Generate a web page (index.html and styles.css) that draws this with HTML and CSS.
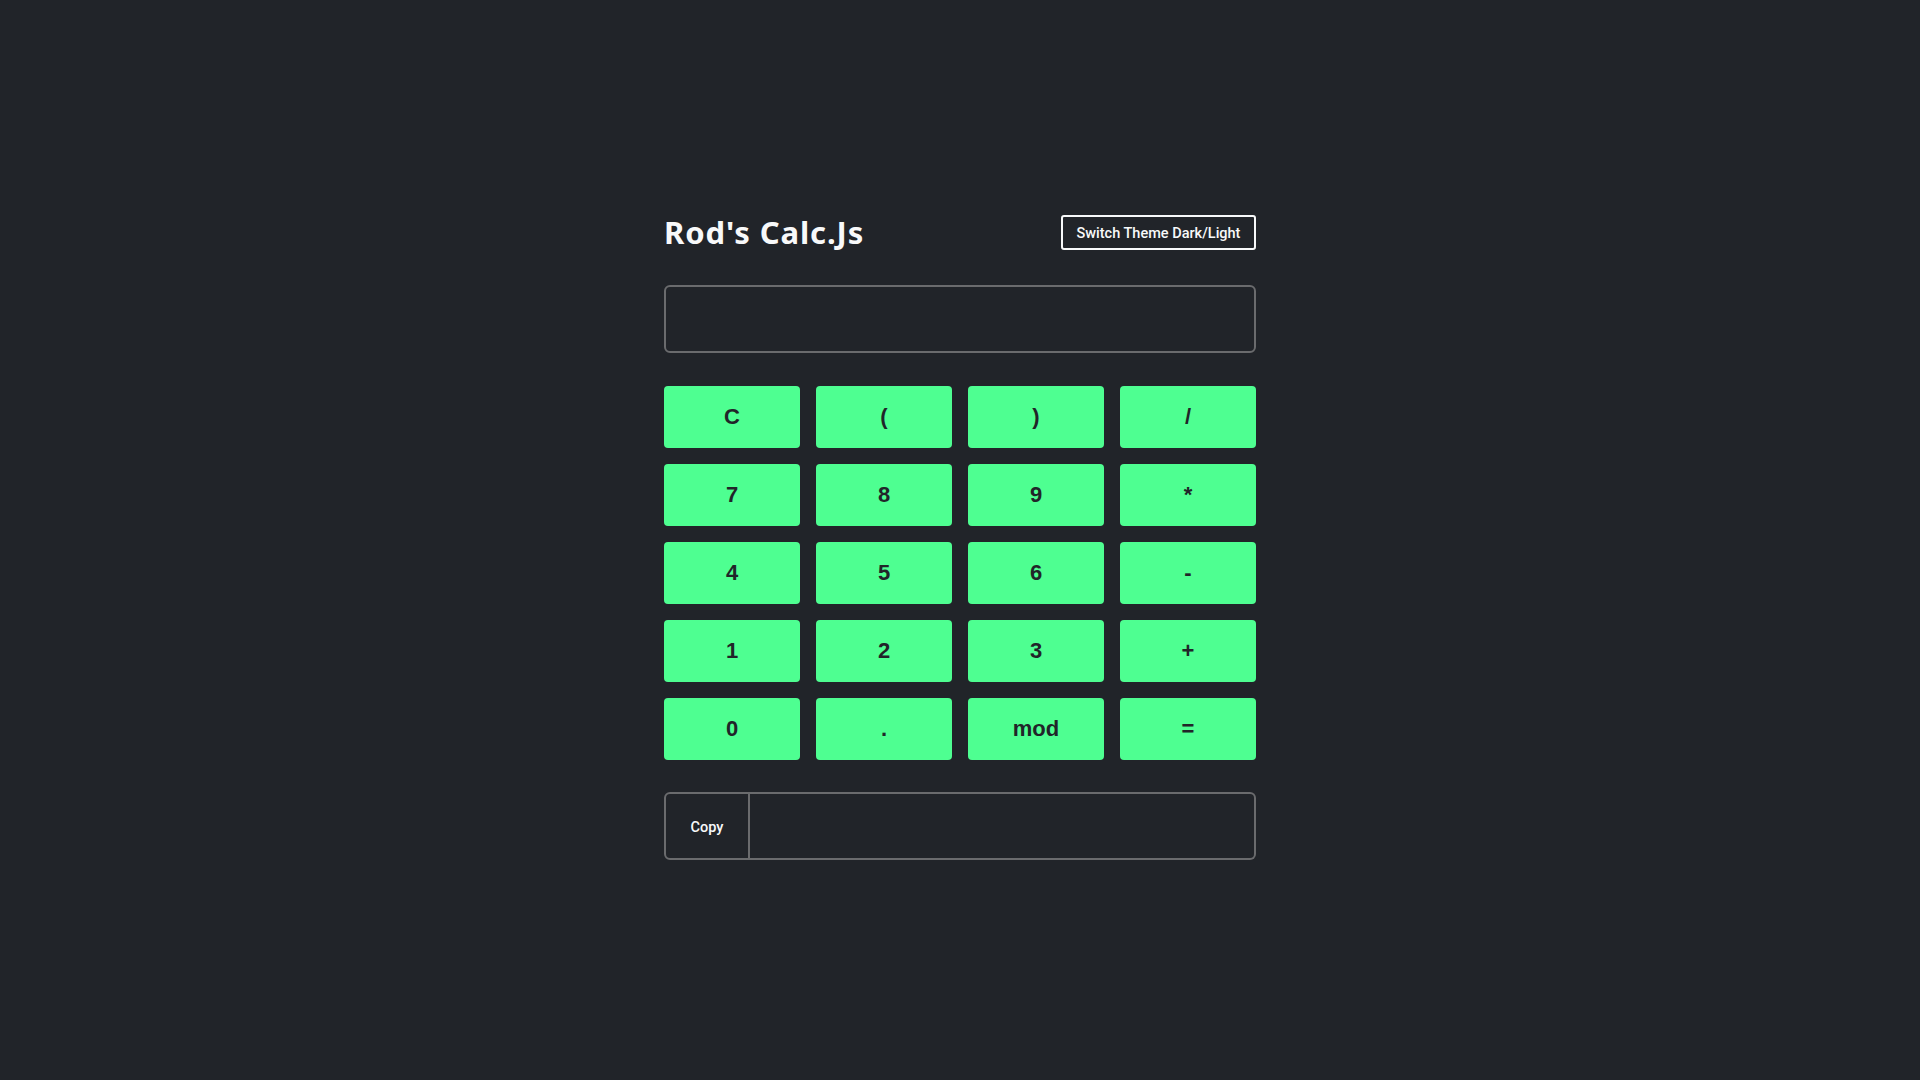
FILE: index.html
```html
<!DOCTYPE html>
<html lang="en">
<head>
<meta charset="utf-8">
<title>Rod's Calc.Js</title>
<link rel="stylesheet" href="styles.css">
</head>
<body>
<main class="page">
  <section class="calc">
    <header class="calc-header">
      <h1 class="calc-title">Rod's Calc.Js</h1>
      <button class="theme-btn" type="button">Switch Theme Dark/Light</button>
    </header>
    <input class="display" type="text" aria-label="display">
    <div class="keys">
      <button class="key">C</button>
      <button class="key">(</button>
      <button class="key">)</button>
      <button class="key">/</button>
      <button class="key">7</button>
      <button class="key">8</button>
      <button class="key">9</button>
      <button class="key">*</button>
      <button class="key">4</button>
      <button class="key">5</button>
      <button class="key">6</button>
      <button class="key">-</button>
      <button class="key">1</button>
      <button class="key">2</button>
      <button class="key">3</button>
      <button class="key">+</button>
      <button class="key">0</button>
      <button class="key">.</button>
      <button class="key">mod</button>
      <button class="key">=</button>
    </div>
    <div class="copy-group">
      <button class="copy-btn" type="button">Copy</button>
      <input class="copy-input" type="text" aria-label="result">
    </div>
  </section>
</main>
</body>
</html>
```

FILE: styles.css
```css
html, body {
  margin: 0;
  padding: 0;
  background: #212429;
  height: 100%;
}

.page {
  padding-top: 214px;
  padding-left: 664px;
}

.calc {
  width: 592px;
  display: flex;
  flex-direction: column;
}

.calc-header {
  display: flex;
  justify-content: space-between;
  align-items: center;
  height: 36px;
}

.calc-title {
  margin: 0;
  font-family: "Noto Sans", "Open Sans", sans-serif;
  font-weight: 700;
  font-size: 31px;
  line-height: 36px;
  color: #f8f9fa;
  letter-spacing: 0.9px;
}

.theme-btn {
  width: 195px;
  height: 35px;
  margin-top: 1px;
  background: transparent;
  border: 2px solid #f8f9fa;
  border-radius: 3px;
  color: #f8f9fa;
  font-family: "Roboto", "Liberation Sans", sans-serif;
  font-weight: 500;
  font-size: 14.5px;
  padding: 2px 0 0;
}

.display {
  margin-top: 35px;
  height: 68px;
  box-sizing: border-box;
  border: 2px solid #6a6b6d;
  border-radius: 6px;
  background: transparent;
  padding: 0 12px;
  color: #f8f9fa;
  font-size: 24px;
}

.keys {
  margin-top: 33px;
  display: grid;
  grid-template-columns: repeat(4, 1fr);
  grid-auto-rows: 62px;
  column-gap: 16px;
  row-gap: 16px;
}

.key {
  background: #4eff91;
  border: none;
  border-radius: 4px;
  color: #212529;
  font-family: "Liberation Sans", Arial, sans-serif;
  font-weight: 700;
  font-size: 22px;
  padding: 0;
}

.copy-group {
  margin-top: 32px;
  display: flex;
  height: 68px;
}

.copy-btn {
  width: 86px;
  box-sizing: border-box;
  background: transparent;
  border: 2px solid #6a6b6d;
  border-radius: 6px 0 0 6px;
  color: #f8f9fa;
  font-family: "Roboto", "Liberation Sans", sans-serif;
  font-weight: 500;
  font-size: 14.5px;
  padding: 2px 0 0;
}

.copy-input {
  flex: 1;
  box-sizing: border-box;
  border: 2px solid #6a6b6d;
  border-left: none;
  border-radius: 0 6px 6px 0;
  background: transparent;
  color: #f8f9fa;
  padding: 0 12px;
}
```
